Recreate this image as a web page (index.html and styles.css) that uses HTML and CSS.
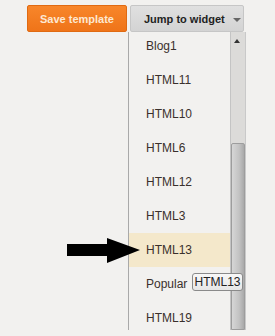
FILE: index.html
```html
<!DOCTYPE html>
<html lang="en">
<head>
    <meta charset="UTF-8">
    <meta name="viewport" content="width=device-width, initial-scale=1.0">
    <title>Jump to widget</title>
    <link rel="stylesheet" href="styles.css">
</head>
<body>
    <div class="toolbar">
        <button class="save-btn">Save template</button>
        <button class="jump-btn">Jump to widget <span class="caret"></span></button>
    </div>

    <!-- dropdown list opened under the jump button -->
    <div class="dropdown">
        <ul class="widget-list">
            <li>Blog1</li>
            <li>HTML11</li>
            <li>HTML10</li>
            <li>HTML6</li>
            <li>HTML12</li>
            <li>HTML3</li>
            <li class="hover">HTML13</li>
            <li>Popular</li>
            <li>HTML19</li>
        </ul>
        <div class="scrollbar">
            <div class="scroll-up"></div>
            <div class="scroll-thumb"></div>
        </div>
    </div>

    <div class="tooltip">HTML13</div>

    <svg class="pointer" width="73" height="25" viewBox="0 0 73 25">
        <polygon points="0,6 40,6 40,0 73,12 40,25 40,18 0,18" fill="#000"/>
    </svg>
</body>
</html>
```

FILE: styles.css
```css
/* Reset default margin and padding */
* {
    margin: 0;
    padding: 0;
    box-sizing: border-box;
}

body {
    font-family: Arial, "Liberation Sans", sans-serif;
    background-color: #f2f1ef;
    width: 275px;
    height: 336px;
    overflow: hidden;
    position: relative;
}

.toolbar {
    display: flex;
    padding: 5px 0 0 27px;
}

.save-btn {
    width: 100px;
    height: 27px;
    border: 1px solid #e06a12;
    border-radius: 2px;
    background: linear-gradient(#f8862a, #ef7419);
    color: #fde8d2;
    font-family: inherit;
    font-weight: bold;
    font-size: 11px;
    white-space: nowrap;
}

.jump-btn {
    width: 114px;
    height: 27px;
    margin-left: 3px;
    border: 1px solid #c6c6c6;
    border-radius: 2px;
    background: linear-gradient(#e0e0e0, #d3d3d3);
    color: #222;
    font-family: inherit;
    font-weight: bold;
    font-size: 11px;
    white-space: nowrap;
    display: flex;
    align-items: center;
    padding-left: 13px;
}

.caret {
    width: 0;
    height: 0;
    margin-left: 8px;
    margin-top: 2px;
    border-left: 4px solid transparent;
    border-right: 4px solid transparent;
    border-top: 4px solid #666;
}

.dropdown {
    position: absolute;
    left: 128px;
    top: 32px;
    width: 118px;
    height: 298px;
    display: flex;
    background-color: #f2f1ef;
    border-left: 1px solid #a9a9a9;
    border-right: 1px solid #c9c9c9;
    overflow: hidden;
}

.widget-list {
    list-style: none;
    flex: 1;
    margin-top: -3px;
}

.widget-list li {
    height: 34px;
    line-height: 34px;
    padding-left: 17px;
    font-size: 12px;
    color: #3a302c;
}

.widget-list li.hover {
    background-color: #f4e8cb;
}

.scrollbar {
    width: 15px;
    display: flex;
    flex-direction: column;
    background-color: #dcdbd9;
    border-left: 1px solid #c4c4c4;
}

.scroll-up {
    height: 14px;
    margin-top: 4px;
    position: relative;
}

.scroll-up::after {
    content: "";
    position: absolute;
    left: 3px;
    top: 3px;
    border-left: 3px solid transparent;
    border-right: 3px solid transparent;
    border-bottom: 4px solid #333;
}

.scroll-thumb {
    margin-top: 93px;
    flex: 1;
    border: 1px solid #9d9d9d;
    border-radius: 2px 2px 0 0;
    background: linear-gradient(to right, #d6d6d6, #c2c2c2 60%, #a9a9a9);
}

.tooltip {
    position: absolute;
    left: 192px;
    top: 273px;
    width: 51px;
    height: 18px;
    line-height: 16px;
    text-align: center;
    font-size: 12px;
    color: #222;
    background: linear-gradient(#f8f8f8, #e6e6e6);
    border: 1px solid #8a8a8a;
    border-radius: 3px;
}

.pointer {
    position: absolute;
    left: 67px;
    top: 238px;
}
```
